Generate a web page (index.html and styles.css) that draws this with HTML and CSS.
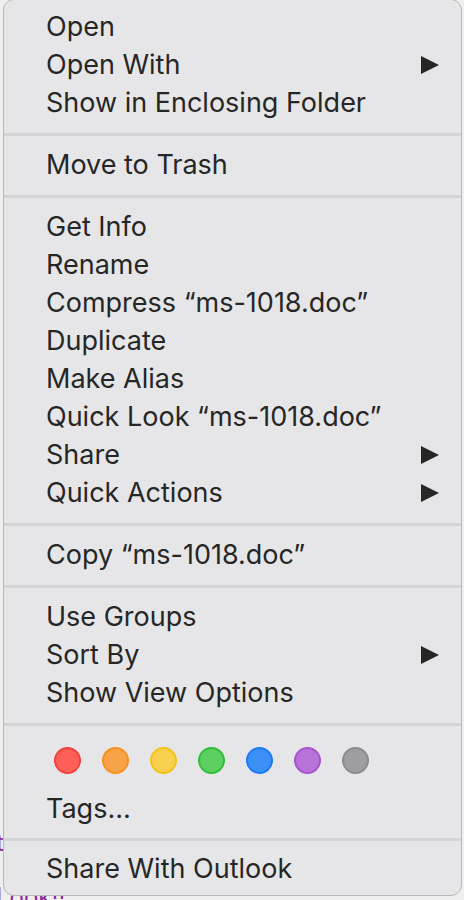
FILE: index.html
```html
<!DOCTYPE html>
<html>
<head>
<meta charset="utf-8">
<link rel="stylesheet" href="styles.css">
</head>
<body>
<div class="backdrop">
  <span class="bg-t">t</span>
  <span class="bg-look">Look!!</span>
</div>
<div class="menu">
  <div class="item">Open</div>
  <div class="item sub">Open With<span class="arrow"></span></div>
  <div class="item">Show in Enclosing Folder</div>
  <div class="sep"></div>
  <div class="item">Move to Trash</div>
  <div class="sep"></div>
  <div class="item">Get Info</div>
  <div class="item">Rename</div>
  <div class="item">Compress “ms-1018.doc”</div>
  <div class="item">Duplicate</div>
  <div class="item">Make Alias</div>
  <div class="item">Quick Look “ms-1018.doc”</div>
  <div class="item sub">Share<span class="arrow"></span></div>
  <div class="item sub">Quick Actions<span class="arrow"></span></div>
  <div class="sep"></div>
  <div class="item">Copy “ms-1018.doc”</div>
  <div class="sep"></div>
  <div class="item">Use Groups</div>
  <div class="item sub">Sort By<span class="arrow"></span></div>
  <div class="item">Show View Options</div>
  <div class="sep"></div>
  <div class="tags">
    <span class="dot red"></span>
    <span class="dot orange"></span>
    <span class="dot yellow"></span>
    <span class="dot green"></span>
    <span class="dot blue"></span>
    <span class="dot purple"></span>
    <span class="dot gray"></span>
  </div>
  <div class="item">Tags…</div>
  <div class="sep sep-last"></div>
  <div class="item">Share With Outlook</div>
</div>
</body>
</html>
```
FILE: styles.css
```css
html, body {
  margin: 0;
  padding: 0;
}
body {
  width: 464px;
  height: 900px;
  background: #efefef;
  position: relative;
  overflow: hidden;
  font-family: Inter, "Noto Sans", sans-serif;
}
.backdrop {
  position: absolute;
  inset: 0;
}
.bg-t {
  position: absolute;
  left: -4px;
  top: 828px;
  color: #8a2a9a;
  font-size: 24px;
}
.bg-look {
  position: absolute;
  left: -4px;
  top: 882px;
  color: #8a2a9a;
  font-size: 24px;
}
.menu {
  position: absolute;
  left: 3px;
  top: -1px;
  width: 459px;
  height: 897px;
  box-sizing: border-box;
  padding-top: 8px;
  background: #e6e6e8;
  border: 1px solid #b8b8ba;
  border-radius: 11px;
  display: flex;
  flex-direction: column;
  color: #262626;
  font-size: 27px;
}
.item {
  height: 38px;
  line-height: 38px;
  padding-left: 42px;
  display: flex;
  align-items: center;
  justify-content: space-between;
  padding-right: 22px;
  white-space: nowrap;
}
.arrow {
  width: 0;
  height: 0;
  border-top: 9.5px solid transparent;
  border-bottom: 9.5px solid transparent;
  border-left: 18px solid #262626;
}
.sep {
  height: 24px;
  display: flex;
  align-items: center;
}
.sep-last {
  height: 22px;
}
.sep::before {
  content: "";
  display: block;
  width: 100%;
  height: 3px;
  background: #d3d3d6;
}
.tags {
  height: 54px;
  box-sizing: border-box;
  padding: 11px 0 0 50px;
  display: flex;
  gap: 21px;
}
.dot {
  width: 23px;
  height: 23px;
  border-radius: 50%;
  border: 2px solid;
  flex: none;
}
.red { background: #fe5f57; border-color: #f3403a; }
.orange { background: #f8a348; border-color: #f7901e; }
.yellow { background: #f9cf50; border-color: #f5c211; }
.green { background: #5ccf60; border-color: #2fbe36; }
.blue { background: #3d8ff8; border-color: #1a7af5; }
.purple { background: #b773d7; border-color: #a752d0; }
.gray { background: #9e9ea2; border-color: #8b8b8f; }
```
